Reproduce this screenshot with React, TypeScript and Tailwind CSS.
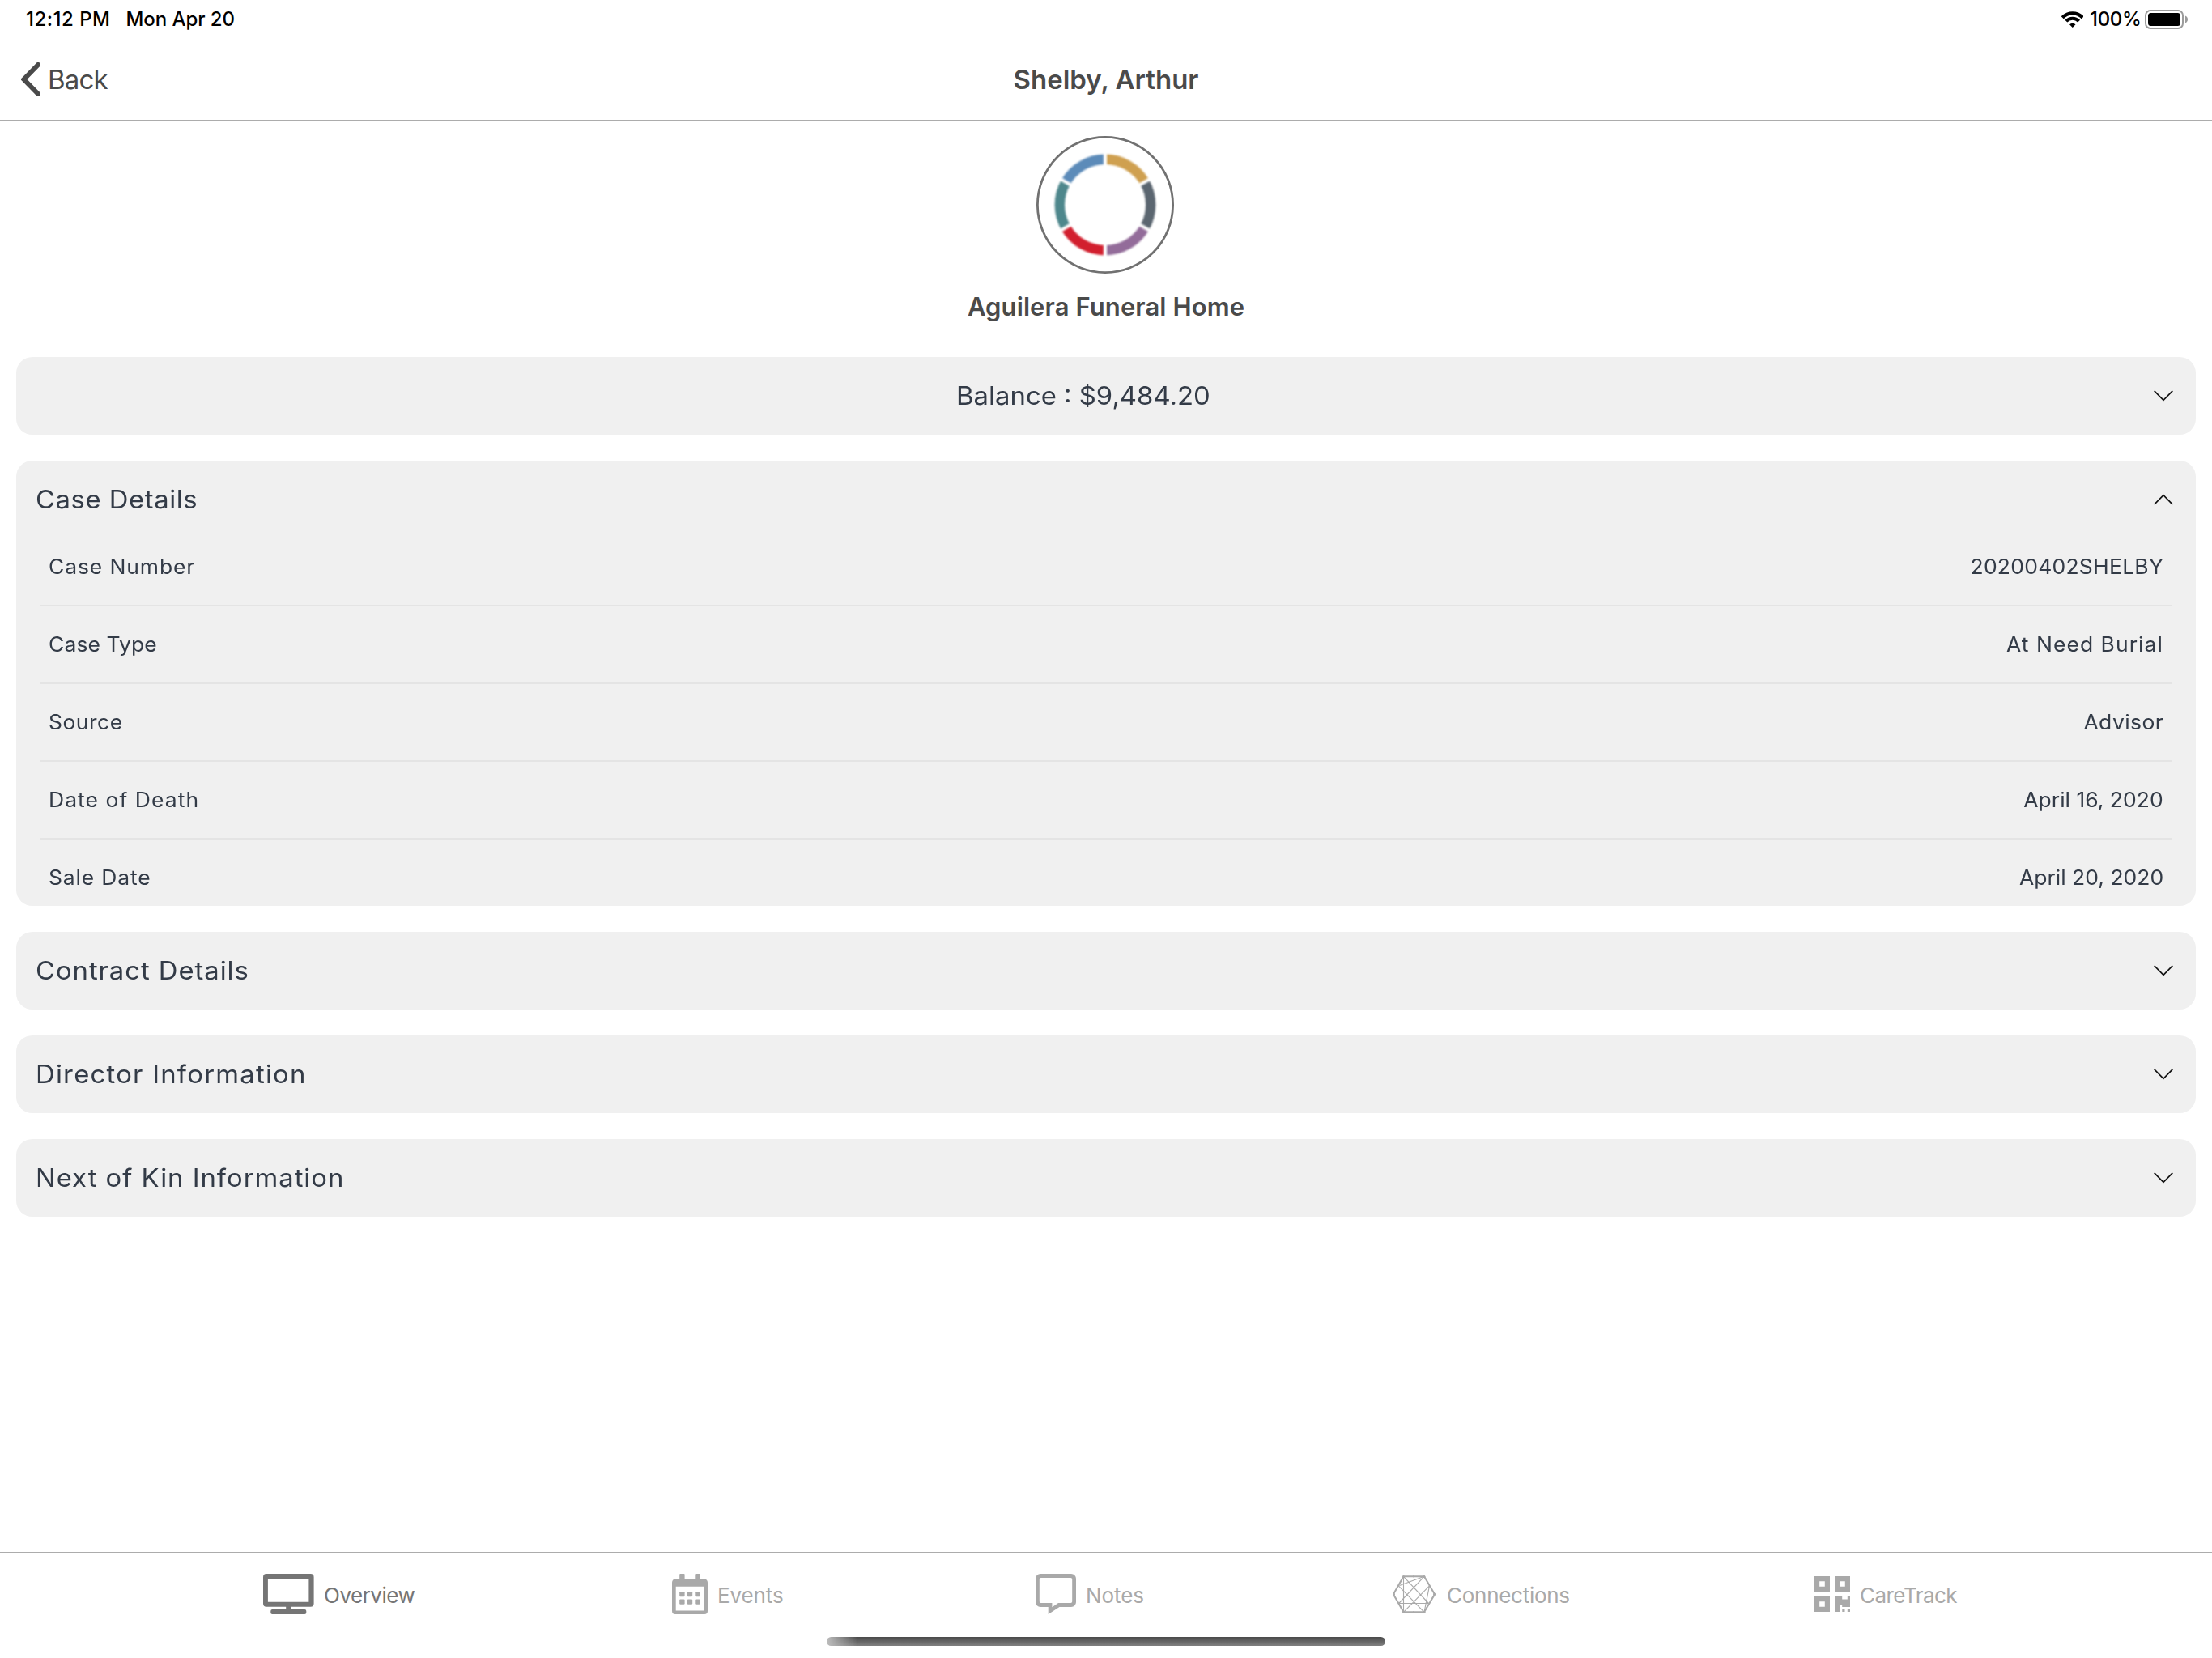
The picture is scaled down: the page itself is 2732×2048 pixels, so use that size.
import type { ReactNode } from 'react'
import clsx from 'clsx'

const caseRows = [
  { label: 'Case Number', value: '20200402SHELBY', labelClass: 'tracking-[0.82px]', valueClass: 'tracking-[0.22px]' },
  { label: 'Case Type', value: 'At Need Burial', labelClass: 'tracking-[0.07px]', valueClass: 'tracking-[0.96px]' },
  { label: 'Source', value: 'Advisor', labelClass: 'tracking-[0.46px]', valueClass: 'tracking-[0.4px]' },
  { label: 'Date of Death', value: 'April 16, 2020', labelClass: 'tracking-[0.99px]', valueClass: 'tracking-normal' },
  { label: 'Sale Date', value: 'April 20, 2020', labelClass: 'tracking-[0.78px]', valueClass: 'tracking-normal' },
]

const ringColors = ['#cfa050', '#5b6670', '#936c9a', '#d21f2e', '#4e878c', '#5c8bb9']

function StatusBar() {
  return (
    <div className="flex h-12 shrink-0 items-center justify-between pl-8 pr-[30px] text-[24px] font-medium leading-none text-black">
      <div className="flex gap-[19px]">
        <span className="tracking-[0.5px]">12:12 PM</span>
        <span className="tracking-[-0.06px]">Mon Apr 20</span>
      </div>
      <div className="flex items-center">
        <svg className="mr-[7.5px] h-5 w-[27.5px]" viewBox="0 0 27.5 20" fill="none">
          <path d="M1.2 7.7A17.4 17.4 0 0 1 26.3 7.7" stroke="#000" strokeWidth="4.2" />
          <path d="M5.9 12.1A11 11 0 0 1 21.6 12.1" stroke="#000" strokeWidth="4" />
          <path d="M13.75 20L10 16.2A5.3 5.3 0 0 1 17.5 16.2Z" fill="#000" />
        </svg>
        <span className="tracking-[-0.32px]">100%</span>
        <svg className="ml-[4.5px] h-6 w-[53px]" viewBox="0 0 53 24" fill="none">
          <rect x="1" y="1" width="46" height="22" rx="6" stroke="#9b9b9b" strokeWidth="2" />
          <rect x="4" y="4" width="40" height="16" rx="3.5" fill="#000" />
          <path d="M50 7.5C52 8.4 53 10.1 53 12C53 13.9 52 15.6 50 16.5Z" fill="#9b9b9b" />
        </svg>
      </div>
    </div>
  )
}

function NavBar() {
  return (
    <header className="grid h-[101px] shrink-0 grid-cols-3 items-center border-b border-[#acacac] text-[33px] leading-none text-[#4a4a4a]">
      <button className="flex items-center pl-[26px]">
        <svg className="h-[42px] w-6" viewBox="0 0 24 42" fill="none">
          <path d="M21 3L3.5 21L21 39" stroke="#4a4a4a" strokeWidth="6" strokeLinecap="round" />
        </svg>
        <span className="ml-[9px] tracking-[-0.8px]">Back</span>
      </button>
      <h1 className="text-center font-semibold">Shelby, Arthur</h1>
    </header>
  )
}

function RingLogo() {
  // six 60 degree arcs, the seams between them are drawn over in white
  const point = (deg: number) => {
    const rad = (deg * Math.PI) / 180
    return `${(85 + 56.2 * Math.sin(rad)).toFixed(2)} ${(85 - 56.2 * Math.cos(rad)).toFixed(2)}`
  }
  return (
    <svg className="mr-0.5 h-[170px] w-[170px]" viewBox="0 0 170 170" fill="none">
      <circle cx="85" cy="85" r="83.6" stroke="#717171" strokeWidth="2.8" />
      <g className="blur-[1px]">
        {ringColors.map((color, i) => (
          <path key={color} d={`M${point(i * 60)}A56.2 56.2 0 0 1 ${point(i * 60 + 60)}`} stroke={color} strokeWidth="12.4" />
        ))}
        {[0, 60, 120].map((deg) => (
          <path key={deg} d="M85 20V150" stroke="#fff" strokeWidth="4.2" transform={`rotate(${deg} 85 85)`} />
        ))}
      </g>
    </svg>
  )
}

function Chevron({ open = false }: { open?: boolean }) {
  return (
    <svg className={clsx('h-3.5 w-6 shrink-0', open && 'rotate-180')} viewBox="0 0 24 14" fill="none">
      <path d="M0.7 0.9L12 12.3L23.3 0.9" stroke="#111" strokeWidth="1.7" />
    </svg>
  )
}

type PanelProps = {
  title: string
  titleClass: string
  centered?: boolean
  open?: boolean
  children?: ReactNode
}

function Panel({ title, titleClass, centered, open, children }: PanelProps) {
  return (
    <section className="shrink-0 overflow-hidden rounded-[20px] bg-[#f0f0f0] text-[#333b47]">
      <button className="flex h-24 w-full items-center pr-7 text-[31px] leading-none">
        <span className={clsx('flex flex-1 whitespace-nowrap pb-0.5', centered ? 'justify-center pr-1' : 'pl-6')}>
          <span className={clsx('scale-x-106', centered ? 'origin-center' : 'origin-left', titleClass)}>{title}</span>
        </span>
        <Chevron open={open} />
      </button>
      {children}
    </section>
  )
}

function MonitorIcon() {
  return (
    <svg className="h-[50px] w-[63px]" viewBox="0 0 63 50" fill="currentColor">
      <path
        fillRule="evenodd"
        d="M4 0H58.6A4 4 0 0 1 62.6 4V36.7A4 4 0 0 1 58.6 40.7H34.3V44H51.3A2 2 0 0 1 53.3 46V48A2 2 0 0 1 51.3 50H11.3A2 2 0 0 1 9.3 48V46A2 2 0 0 1 11.3 44H28.2V40.7H4A4 4 0 0 1 0 36.7V4A4 4 0 0 1 4 0ZM5.9 6.2V34.7H56.4V6.2Z"
      />
    </svg>
  )
}

function CalendarIcon() {
  return (
    <svg className="h-[50px] w-11" viewBox="0 0 44 50" fill="currentColor">
      <rect x="9.2" width="6.4" height="10" rx="1" />
      <rect x="28.3" width="6.4" height="10" rx="1" />
      <path
        fillRule="evenodd"
        d="M4.5 6.2H39.5A4.5 4.5 0 0 1 44 10.7V46A4 4 0 0 1 40 50H4A4 4 0 0 1 0 46V10.7A4.5 4.5 0 0 1 4.5 6.2ZM4.7 15.8V45.4H39.3V15.8Z"
      />
      {[22, 31.4].map((y) =>
        [9.2, 18.8, 28.3].map((x) => <rect key={`${x}-${y}`} x={x} y={y} width="6.4" height="6.3" rx="1.2" />),
      )}
    </svg>
  )
}

function NoteIcon() {
  return (
    <svg className="h-[50px] w-[50px]" viewBox="0 0 50 50" fill="currentColor">
      <path
        fillRule="evenodd"
        d="M6 0H44A6 6 0 0 1 50 6V35A6 6 0 0 1 44 41H29.5L15.7 50V41H6A6 6 0 0 1 0 35V6A6 6 0 0 1 6 0ZM6.5 5A1.7 1.7 0 0 0 4.8 6.7V34.3A1.7 1.7 0 0 0 6.5 36H20.4V41.2L28 36H43.5A1.7 1.7 0 0 0 45.2 34.3V6.7A1.7 1.7 0 0 0 43.5 5Z"
      />
    </svg>
  )
}

function HexagonIcon() {
  return (
    <svg className="h-[47px] w-[53px]" viewBox="0 0 53 47" fill="none" stroke="currentColor">
      <path d="M13.5 1.3H39L52 23.3L39 45.3H13.5L0.9 23.3Z" strokeWidth="2.1" />
      <path
        d="M13.5 1.3V45.3M13.5 1.3L44.5 34.5M39 1.3L7.7 34.5M39 1.3L8.5 12.5M7.7 34.5H44.5M13.5 45.3L45.5 12.8M39 45.3L7.3 12.8M45.5 12.8L39 45.3"
        strokeWidth="1.1"
      />
      <path d="M26.2 0V2.6M26.2 44V46.6" strokeWidth="1.6" />
      <g fill="currentColor" stroke="none">
        <circle cx="13.5" cy="1.5" r="1.5" />
        <circle cx="39" cy="1.5" r="1.5" />
        <circle cx="51.5" cy="23.3" r="1.5" />
        <circle cx="39" cy="45.2" r="1.5" />
        <circle cx="13.5" cy="45.2" r="1.5" />
        <circle cx="1.5" cy="23.3" r="1.5" />
      </g>
    </svg>
  )
}

function QrIcon() {
  return (
    <svg className="h-11 w-11" viewBox="0 0 44 44" fill="currentColor" fillRule="evenodd">
      <path d="M0 0H19V19H0ZM6.2 6.3V12.8H12.8V6.3Z" />
      <path d="M25 0H44V19H25ZM31.2 6.3V12.8H37.8V6.3Z" />
      <path d="M0 25H19V44H0ZM6.2 31.3V37.8H12.8V31.3Z" />
      <path d="M25 25H34.2V28.6H40.8V25H44V38H34.2V35H31.2V44H25ZM34.3 41H37.5V44H34.3ZM40.8 41H44V44H40.8Z" />
    </svg>
  )
}

const tabs = [
  { label: 'Overview', Icon: MonitorIcon, className: 'gap-3 tracking-[-0.5px] text-[#757575]' },
  { label: 'Events', Icon: CalendarIcon, className: 'gap-3 tracking-[-0.1px] text-[#a9a9a9]' },
  { label: 'Notes', Icon: NoteIcon, className: 'gap-3 tracking-[-0.1px] text-[#a9a9a9]' },
  { label: 'Connections', Icon: HexagonIcon, className: 'gap-3.5 tracking-[-0.27px] text-[#a9a9a9]' },
  { label: 'CareTrack', Icon: QrIcon, className: 'gap-3 tracking-[-0.54px] text-[#a9a9a9]' },
]

function TabBar() {
  return (
    <footer className="flex h-[131px] shrink-0 flex-col items-center border-t border-[#acacac]">
      <nav className="grid h-[102px] w-full grid-cols-[505px_449px_441px_521px_1fr] pl-[325px] text-[26px] leading-none">
        {tabs.map(({ label, Icon, className }) => (
          <button key={label} className={clsx('flex items-center', className)}>
            <Icon />
            <span className="pt-1">{label}</span>
          </button>
        ))}
      </nav>
      <div className="mt-0.5 h-[11px] w-[690px] rounded-full bg-[linear-gradient(to_right,#bdbdbd,transparent_38px),linear-gradient(to_bottom,#4a4a4a,#808080)]" />
    </footer>
  )
}

export default function App() {
  return (
    <div className="flex h-screen flex-col bg-white font-['Inter',sans-serif]">
      <StatusBar />
      <NavBar />
      <main className="flex min-h-0 flex-1 flex-col">
        <div className="flex shrink-0 flex-col items-center pt-[19px]">
          <RingLogo />
          <h2 className="mt-[21px] text-[31px] font-semibold leading-10 tracking-[0.1px] text-[#4a4a4a]">
            Aguilera Funeral Home
          </h2>
        </div>
        <div className="mt-[42px] flex flex-col gap-8 px-5">
          <Panel title="Balance : $9,484.20" titleClass="tracking-normal" centered />
          <Panel title="Case Details" titleClass="tracking-[0.5px]" open>
            <div className="-mt-3 h-[466px] px-[30px]">
              {caseRows.map((row) => (
                <div
                  key={row.label}
                  className="flex h-24 items-center justify-between border-b-2 border-[#e4e4e4] pl-2.5 pr-2.5 text-[25px] leading-none last:border-transparent"
                >
                  <span className={clsx('origin-left scale-x-106', row.labelClass)}>{row.label}</span>
                  <span className={clsx('origin-right scale-x-106', row.valueClass)}>{row.value}</span>
                </div>
              ))}
            </div>
          </Panel>
          <Panel title="Contract Details" titleClass="tracking-[0.87px]" />
          <Panel title="Director Information" titleClass="tracking-[1.15px]" />
          <Panel title="Next of Kin Information" titleClass="tracking-[0.91px]" />
        </div>
      </main>
      <TabBar />
    </div>
  )
}
